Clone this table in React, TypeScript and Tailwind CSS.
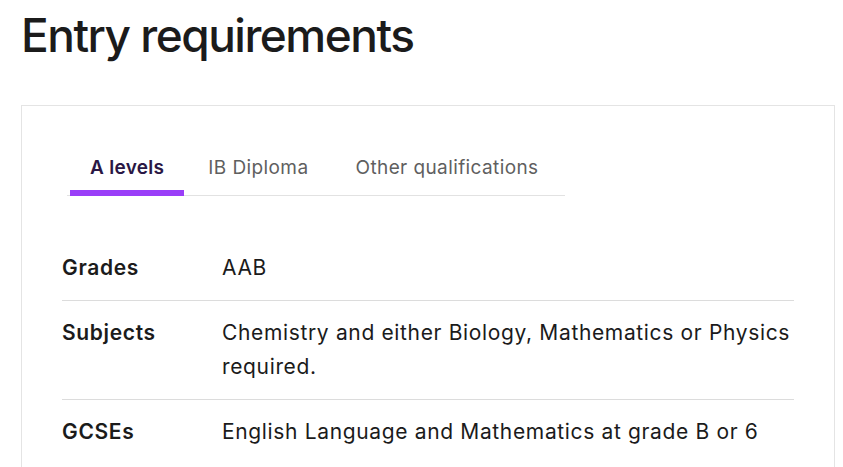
const rows = [
  { label: "Grades", value: "AAB" },
  { label: "Subjects", value: "Chemistry and either Biology, Mathematics or Physics required." },
  { label: "GCSEs", value: "English Language and Mathematics at grade B or 6" },
];

const tabs = [
  { name: "A levels", gap: "ml-[3px]" },
  { name: "IB Diploma", gap: "ml-[4px]" },
  { name: "Other qualifications", gap: "ml-[7px]" },
];

export default function App() {
  return (
    <div className="min-h-screen bg-white pl-[21px] pr-[8px] pt-[8px] font-['Inter',sans-serif] text-[#1b1b1b]">
      <h1 className="text-[46px] leading-[55px] font-medium tracking-[-1.5px]">Entry requirements</h1>

      <div className="mt-[42px] border border-[#e4e4e4] px-10 pt-[50px] pb-10">
        {/* Tabs */}
        <div className="ml-[5px] flex w-[498px] border-b border-[#e2e2e2]">
          {tabs.map((t, i) => (
            <button
              key={t.name}
              className={
                i === 0
                  ? `${t.gap} -mb-px border-b-[6px] border-[#9a3ef8] px-5 pb-[10px] text-[19px] leading-6 font-semibold tracking-[0.3px] text-[#2a1745]`
                  : `${t.gap} -mb-px border-b-[6px] border-transparent px-5 pb-[10px] text-[19px] leading-6 tracking-[0.4px] text-[#5f5f5f]`
              }
            >
              {t.name}
            </button>
          ))}
        </div>

        {/* Table */}
        <div className="mt-[40px]">
          {rows.map((r) => (
            <div
              key={r.label}
              className="flex border-b border-[#dcdcdc] py-[15px] text-[21px] leading-[34px] tracking-[0.65px] last:border-b-0"
            >
              <div className="w-[160px] shrink-0 font-semibold">{r.label}</div>
              <div className="flex-1">{r.value}</div>
            </div>
          ))}
        </div>
      </div>
    </div>
  );
}
